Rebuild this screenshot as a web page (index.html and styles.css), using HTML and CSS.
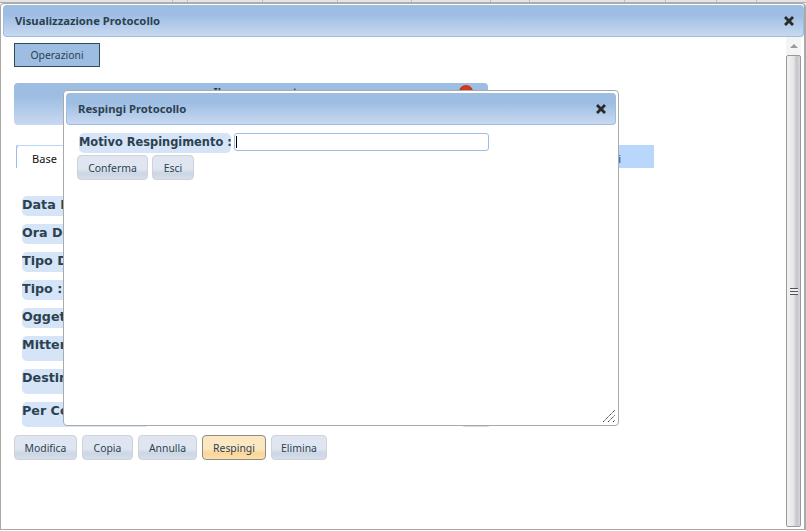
FILE: index.html
```html
<!DOCTYPE html>
<html lang="it">
<head>
<meta charset="utf-8">
<title>Visualizzazione Protocollo</title>
<link rel="stylesheet" href="styles.css">
</head>
<body>
<div class="backdrop-grid">
  <span class="cell c172"></span><span class="cell c15"></span><span class="cell c75"></span><span class="cell c75b"></span><span class="cell c74"></span><span class="cell c79"></span><span class="cell c39"></span><span class="cell c95"></span><span class="cell c41"></span><span class="cell c51"></span><span class="cell c40"></span>
</div>

<section class="window">
  <header class="titlebar main-title">
    <span class="title-text">Visualizzazione Protocollo</span>
    <svg class="close" viewBox="0 0 12 12"><path d="M1 3 3 1l3 3 3-3 2 2-3 3 3 3-2 2-3-3-3 3-2-2 3-3z"/></svg>
  </header>
  <div class="window-body">
    <div class="content">
      <button class="op-btn">Operazioni</button>
      <div class="heading-panel"><span class="heading-text">Il numero errato</span><span class="led"></span></div>
      <nav class="tabs">
        <span class="tab active">Base</span>
        <span class="tab-last">Allegati</span>
      </nav>
      <div class="fields">
        <div class="row"><span class="label">Data Documento :</span></div>
        <div class="row"><span class="label">Ora Documento :</span></div>
        <div class="row"><span class="label">Tipo Documento :</span></div>
        <div class="row"><span class="label">Tipo :</span></div>
        <div class="row"><span class="label">Oggetto :</span></div>
        <div class="row tall"><span class="label">Mittente :</span></div>
        <div class="row tall"><span class="label">Destinatario :</span></div>
        <div class="row tall"><span class="label">Per Conoscenza :</span><span class="peek"></span></div>
      </div>
      <div class="actions">
        <button class="btn w63">Modifica</button>
        <button class="btn w51">Copia</button>
        <button class="btn w59">Annulla</button>
        <button class="btn w64 hot">Respingi</button>
        <button class="btn w56">Elimina</button>
      </div>
    </div>
    <div class="scrollbar">
      <div class="arrow"><span class="arrow-up"></span></div>
      <div class="thumb"><span class="grip"></span></div>
    </div>
  </div>
</section>

<section class="modal">
  <header class="titlebar modal-title">
    <span class="title-text">Respingi Protocollo</span>
    <svg class="close" viewBox="0 0 12 12"><path d="M1 3 3 1l3 3 3-3 2 2-3 3 3 3-2 2-3-3-3 3-2-2 3-3z"/></svg>
  </header>
  <div class="modal-form">
    <span class="label motivo">Motivo Respingimento :</span>
    <div class="input"><span class="caret"></span></div>
  </div>
  <div class="modal-actions">
    <button class="btn w71">Conferma</button>
    <button class="btn w42">Esci</button>
  </div>
  <svg class="resize" viewBox="0 0 13 13"><path d="M0 12 12 0M5 12 12 5M10 12 12 10" stroke="#333" stroke-width="1" stroke-dasharray="1.4 .6" fill="none"/></svg>
</section>
</body>
</html>
```

FILE: styles.css
```css
* { box-sizing: border-box; }
html, body { margin: 0; height: 100%; }
body {
  position: relative;
  overflow: hidden;
  width: 806px;
  height: 531px;
  background: #fff;
  font-family: "Noto Sans", "Open Sans", sans-serif;
  font-size: 11px;
  color: #2b4150;
}
.backdrop-grid {
  display: flex;
  height: 3px;
  background: #e4e4e4;
  border-bottom: 1px solid #aeaeae;
}
.cell { display: block; border-right: 1px solid #bdbdbd; height: 100%; }
.c172 { width: 173px; }
.c15 { width: 15px; }
.c75 { width: 75px; }
.c75b { width: 75px; }
.c74 { width: 74px; }
.c79 { width: 79px; }
.c39 { width: 39px; }
.c95 { width: 95px; }
.c41 { width: 41px; }
.c51 { width: 51px; }
.c40 { width: 40px; }

.window {
  position: absolute;
  left: 0;
  top: 3px;
  width: 806px;
  height: 527px;
  padding: 1px 3px 0 3px;
  background: #fff;
  border: 1px solid #aaa;
  border-width: 1px 2px 1px 1px;
  border-radius: 4px 4px 0 0;
  display: flex;
  flex-direction: column;
}
.titlebar {
  display: flex;
  align-items: center;
  justify-content: space-between;
  background: linear-gradient(#9dbde3 0%, #9dbde3 30%, #c8d9f0 100%);
  border: 1px solid #9dbde3;
  border-top: 0;
  border-radius: 4px;
  font-weight: 700;
  color: #2b4150;
}
.main-title { height: 32px; padding: 0 8px 0 11px; margin: 0 -3px 0 -1px; }
.modal-title { height: 32px; padding: 0 8px 0 11px; }
.title-text { font-size: 11.25px; }
.close { width: 12px; height: 12px; fill: #2a2a2a; }

.window-body { flex: 1; display: flex; min-height: 0; }
.content { width: 785px; padding: 6px 0 0 10px; display: flex; flex-direction: column; align-items: flex-start; }

.op-btn {
  width: 86px;
  height: 24px;
  padding: 0;
  font: inherit;
  font-size: 10.4px;
  color: inherit;
  background: #9dbde3;
  border: 1px solid #2d4d5c;
}
.heading-panel {
  position: relative;
  width: 474px;
  height: 42px;
  margin-top: 16px;
  padding: 2px 0 0 16px;
  border-radius: 4px;
  background: linear-gradient(#9dbde3 30%, #c8d9f0 100%);
  text-align: center;
  font-weight: 700;
}
.heading-text { display: block; line-height: 14px; }
.led {
  position: absolute;
  right: 15px;
  top: 2px;
  width: 14px;
  height: 14px;
  border-radius: 50%;
  background: radial-gradient(circle at 50% 30%, #d8401f, #a82a10);
}
.tabs {
  display: flex;
  align-items: center;
  justify-content: space-between;
  width: 638px;
  height: 23px;
  margin: 20px 0 0 2px;
  background: #b9d6fb;
  color: #1a3a9a;
}
.tab {
  display: flex;
  align-items: center;
  justify-content: center;
  width: 56px;
  height: 23px;
  padding-top: 3px;
  color: #111;
  background: #fff;
  border-left: 1px solid #9dbde3;
  border-top: 1px solid #b9d6fb;
  border-radius: 4px 0 0 0;
}
.tab-last { padding: 3px 33px 0 0; }

.fields { display: flex; flex-direction: column; gap: 8px; margin: 28px 0 0 8px; width: 468px; }
.row { display: flex; justify-content: space-between; height: 20px; }
.row.tall { height: 25px; }
.label {
  display: block;
  width: 128px;
  height: 100%;
  background: #d6e4f8;
  border-radius: 5px;
  font-family: "DejaVu Sans", sans-serif;
  font-size: 12.7px;
  font-weight: 700;
  line-height: 18px;
  color: #2b4150;
  white-space: nowrap;
  overflow: hidden;
}
.label.motivo { width: 152px; height: 20px; font-size: 11.4px; overflow: visible; }
.peek { width: 28px; height: 100%; background: #d9d9d9; border-radius: 0 0 3px 3px; }

.actions { display: flex; gap: 5px; margin-top: 8px; }
.btn {
  height: 25px;
  padding: 0;
  font: inherit;
  font-size: 10.4px;
  color: #2b4150;
  background: linear-gradient(#dfe6f1 0%, #dfe6f1 55%, #ccd6e4 75%, #d6deea 100%);
  border: 1px solid #cfd2d6;
  border-radius: 4px;
}
.btn.hot {
  background: linear-gradient(#fbe7c2 0%, #fbe7c2 55%, #fbd596 75%, #fbdfae 100%);
  border-color: #8d8d85;
}
.w63 { width: 63px; }
.w51 { width: 51px; }
.w59 { width: 59px; }
.w64 { width: 64px; }
.w56 { width: 56px; }
.w71 { width: 71px; }
.w42 { width: 42px; }

.scrollbar { width: 15px; display: flex; flex-direction: column; height: 490px; }
.arrow { height: 18px; display: flex; align-items: center; justify-content: center; background: #f4f4f4; }
.arrow-up { width: 0; height: 0; border: 4px solid transparent; border-top: 0; border-bottom: 4px solid #999; }
.thumb {
  flex: 1;
  display: flex;
  align-items: center;
  justify-content: center;
  border: 1px solid #999;
  border-radius: 2px;
  background: linear-gradient(90deg, #f2f2f2 0%, #e6e6e6 50%, #c4c4ca 75%, #d8d8dc 100%);
}
.grip {
  width: 8px;
  height: 7px;
  background: repeating-linear-gradient(#555 0 1px, #eee 1px 3px);
}

.modal {
  position: absolute;
  left: 63px;
  top: 90px;
  width: 556px;
  height: 336px;
  padding: 2px;
  background: #fff;
  border: 1px solid #aaa;
  border-radius: 4px;
}
.modal-form { display: flex; gap: 3px; margin: 8px 0 0 13px; }
.input {
  width: 255px;
  height: 18px;
  background: #fff;
  border: 1px solid #9dbde3;
  border-radius: 3px;
  padding: 2px 0 0 1px;
}
.caret { display: block; width: 1px; height: 12px; background: #000; }
.modal-actions { display: flex; gap: 4px; margin: 2px 0 0 11px; }
.resize { position: absolute; right: 2px; bottom: 2px; width: 13px; height: 13px; }
```
